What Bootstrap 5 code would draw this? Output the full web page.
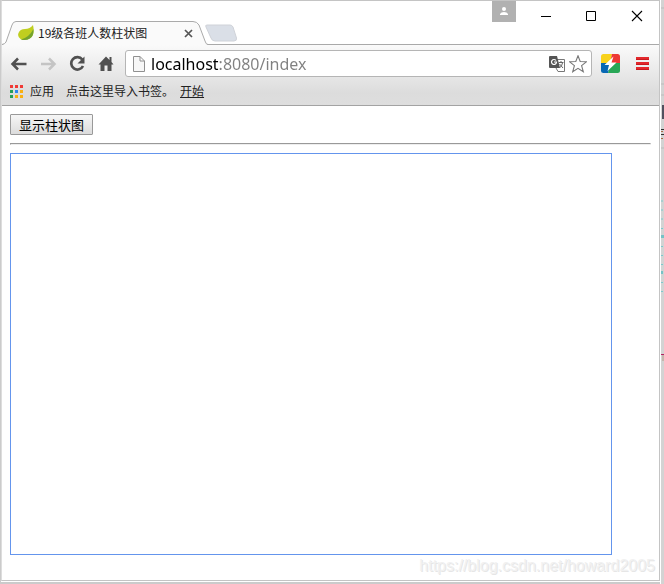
<!DOCTYPE html>
<html lang="zh-CN">
<head>
<meta charset="utf-8">
<meta name="viewport" content="width=device-width, initial-scale=1">
<title>19级各班人数柱状图</title>
<link href="https://cdn.jsdelivr.net/npm/bootstrap@5.3.0/dist/css/bootstrap.min.css" rel="stylesheet">
<style>
body{background:#cbcbcb;font-family:"Noto Sans","Noto Sans CJK SC",sans-serif;font-size:12px;line-height:16px;color:#222;overflow:hidden}
svg{display:block;flex:none}
button.plain{border:0;background:none;padding:0;color:inherit}
.browser{background:#fff;border:1px solid #c4c4c4;border-left-color:#ddd;margin:0 0 3px 1px;min-width:0;box-shadow:0 1px 0 #fff}
.strip{height:44px;border-bottom:1px solid #a9a9a9}
.tabshape{width:206px;height:24px;margin-bottom:-1px}
.tabshape>svg{position:absolute;left:0;top:0}
.tabbody{position:relative;padding:0 11px 0 16px;height:24px;gap:4px;font-family:"Noto Sans CJK SC",sans-serif}
.newtab{margin:0 0 2px -3px}
.winctl{gap:20px;padding-right:16px;height:30px}
.profile{width:24px;height:21px;background:#b1b1b1!important}
.chrome-bar{background:linear-gradient(#fafafa,#dcdcdc 80%,#dedede);border-bottom:1px solid #a3a3a3;height:61px}
.tools{padding:5px 8px 0 7px}
.navicons{gap:9px;margin-right:9px}
.address{height:27px;border:1px solid #b5b5b5;border-radius:3px;background:#fff;padding:0 4px 0 6px}
.address input{border:0;outline:0;padding:0 0 0 5px;min-width:0;font-size:16px;line-height:24px;height:24px;background:linear-gradient(90deg,#000 72px,#808080 72px);-webkit-background-clip:text;background-clip:text;-webkit-text-fill-color:transparent}
.right-tools{gap:15px;margin-left:9px;padding-right:1px}
.bookmarks{padding:6px 8px 0;gap:12px;font-family:"Noto Sans CJK SC",sans-serif}
.bookmarks a{color:#222}
.appicon{margin-right:7px}
.hint{gap:6px}
.page{padding:8px}
.showbtn{height:21px;width:83px;border:1px solid #999;border-radius:1px;background:linear-gradient(#f6f6f6,#dcdcdc);font:13px/17px "Noto Sans CJK SC",sans-serif;color:#000;padding:0}
.page hr{margin:8px 0;border:1px solid #999;border-bottom-color:#eee;border-right-color:#eee;opacity:1;height:2px}
.chart{border:1px solid #6495ed;display:block}
.watermark{right:4px;bottom:4px;font:16px/20px "Liberation Sans",sans-serif;color:#f1f1f1;text-shadow:1px 1px 0 #e6e6e6}
</style>
<script src="https://cdn.jsdelivr.net/npm/bootstrap@5.3.0/dist/js/bootstrap.bundle.min.js"></script>
</head>
<body class="d-flex vh-100">
<main class="browser flex-fill d-flex flex-column position-relative">
  <header class="strip d-flex align-items-end flex-shrink-0">
    <div class="tabshape position-relative flex-shrink-0">
      <svg width="206" height="24" viewBox="0 0 206 24"><path d="M0 24 Q3 23 4 21L10 4Q11 .5 14 .5H191Q195 .5 197 4L203 20Q204 23 206 24Z" fill="#fafafa"/><path d="M0 23.5Q3 23 4 21L10 4Q11 .5 14 .5H191Q195 .5 197 4L203 20Q204 23.5 206 23.5" fill="none" stroke="#aaa"/></svg>
      <div class="tabbody d-flex align-items-center">
        <svg width="16" height="16" viewBox="0 0 16 16"><path d="M15 0Q17 9 13 12.500Q9 15.500 3 14.500Q-1 12 .5 8Q2 4 7 4Q12 4 15 0Z" fill="#bfce20"/><path d="M15.500 4Q16 11 12 13.500Q8 16 3 14.500Q11 12.500 15.500 4Z" fill="#74a32d"/></svg>
        <span class="flex-fill text-nowrap">19级各班人数柱状图</span>
        <button class="plain me-1" type="button" aria-label="关闭标签页"><svg width="9" height="9" viewBox="0 0 9 9"><path d="M1 1L8 8M8 1L1 8" stroke="#555" stroke-width="1.700"/></svg></button>
      </div>
    </div>
    <button class="plain newtab" type="button" aria-label="新标签页"><svg width="32" height="18" viewBox="-3 0 32 18"><path d="M-1 1H22Q24 1 25 3L28.500 14Q29 17 26 17H7Q4 17 3 14L-2 3Q-3 1 -1 1Z" fill="#dadfe7" stroke="#cfd2d8"/></svg></button>
    <div class="winctl d-flex align-items-center ms-auto align-self-start">
      <button class="plain profile align-self-start d-flex justify-content-center align-items-center me-1" type="button" aria-label="用户"><svg width="8" height="10" viewBox="0 0 8 10"><circle cx="4" cy="2" r="2" fill="#fff"/><path d="M0 8V7Q1 5 4 5Q7 5 8 7V8Z" fill="#fff"/></svg></button>
      <button class="plain" type="button" aria-label="最小化"><svg width="12" height="12" viewBox="0 0 12 12"><path d="M1 6.500H11" stroke="#000"/></svg></button>
      <button class="plain ms-2 ps-1" type="button" aria-label="最大化"><svg width="15" height="12" viewBox="0 0 15 12"><path d="M2.500 1.500H11.500V10.500H2.500Z" fill="none" stroke="#000"/></svg></button>
      <button class="plain ms-2 ps-1" type="button" aria-label="关闭"><svg width="12" height="12" viewBox="0 0 12 12"><path d="M1 1L11 11M11 1L1 11" stroke="#000" stroke-width="1.100"/></svg></button>
    </div>
  </header>
  <div class="chrome-bar flex-shrink-0">
    <div class="tools d-flex align-items-center">
      <div class="navicons d-flex align-items-center">
        <button class="plain" type="button" aria-label="后退"><svg width="20" height="20" viewBox="0 0 20 20"><path d="M9 4.500L3.500 10L9 15.500M4 10H17.500" fill="none" stroke="#505050" stroke-width="2.500"/></svg></button>
        <button class="plain" type="button" aria-label="前进"><svg width="20" height="20" viewBox="0 0 20 20"><path d="M11 4.500L16.500 10L11 15.500M16 10H3" fill="none" stroke="#c4c4c4" stroke-width="2.500"/></svg></button>
        <button class="plain" type="button" aria-label="刷新"><svg width="20" height="20" viewBox="0 0 20 20"><path d="M15.300 5.500A6.200 6.200 0 1 0 16 12" fill="none" stroke="#505050" stroke-width="2.700"/><path d="M17.500 2.500V9.500H10.500Z" fill="#505050"/></svg></button>
        <button class="plain" type="button" aria-label="主页"><svg width="20" height="20" viewBox="0 0 20 20"><path d="M10 2.500L2.500 10.500H4.500V17H8.500V11.500H11.500V17H15.500V10.500H17.500L15.500 8V3H13.500V6Z" fill="#505050"/></svg></button>
      </div>
      <div class="address flex-fill d-flex align-items-center">
        <svg width="14" height="16" viewBox="0 0 14 16"><path d="M1.500 .5H8L12.500 5V15.500H1.500ZM8 .5V5H12.500" fill="#f7f7f7" stroke="#909090"/></svg>
        <input class="flex-fill" type="text" value="localhost:8080/index" aria-label="地址">
        <button class="plain me-1" type="button" aria-label="翻译"><svg width="16" height="16" viewBox="0 0 16 16"><path d="M6 3.500H15.500V15.500H9L7 12" fill="#fff" stroke="#777"/><path d="M1 0H8L11 12H1Q0 12 0 11V1Q0 0 1 0Z" fill="#555"/><path d="M7 4.500A2.500 2.500 0 1 0 7.500 6H5" fill="none" stroke="#fff" stroke-width="1.200"/><path d="M9.500 6.500H14.500M12 5V6.500M13.500 7Q13 10 10.500 12M10.500 8L14 12" fill="none" stroke="#666"/></svg></button>
        <button class="plain" type="button" aria-label="收藏"><svg width="18" height="18" viewBox="0 0 18 18"><path d="M9 .8L11.200 6.500L17.300 6.800L12.600 10.700L14.300 16.700L9 13.300L3.700 16.700L5.400 10.700L.7 6.800L6.800 6.500Z" fill="#fff" stroke="#777" stroke-width="1.100"/></svg></button>
      </div>
      <div class="right-tools d-flex align-items-center">
        <button class="plain" type="button" aria-label="扩展程序"><svg width="19" height="19" viewBox="0 0 19 19"><defs><clipPath id="round"><rect width="19" height="19" rx="2.500"/></clipPath></defs><g clip-path="url(#round)"><path d="M0 0H11L9 10H0Z" fill="#f8d21c"/><path d="M11 0H19V9H9Z" fill="#ed3834"/><path d="M0 9H10L7 19H0Z" fill="#0868b4"/><path d="M10 9H19V19H7Z" fill="#28a756"/><path d="M12.500 2.500L3.500 11H8L6.500 17L15.500 8.500H10.500Z" fill="#fff"/></g></svg></button>
        <button class="plain" type="button" aria-label="菜单"><svg width="15" height="15" viewBox="0 0 15 15"><path d="M1 2.500H14M1 7.500H14M1 12.500H14" stroke="#e3282c" stroke-width="3"/><path d="M1 3.500H14M1 8.500H14M1 13.500H14" stroke="#c8191e"/></svg></button>
      </div>
    </div>
    <nav class="bookmarks d-flex align-items-center" aria-label="书签栏">
      <a href="#" class="d-flex align-items-center text-decoration-none"><svg class="appicon" width="13" height="13" viewBox="0 0 13 13"><path d="M0 0H3V3H0ZM5 0H8V3H5ZM10 0H13V3H10Z" fill="#f03a35"/><path d="M0 5H3V8H0ZM0 10H3V13H0Z" fill="#269e59"/><path d="M5 5H8V8H5Z" fill="#2d87ee"/><path d="M10 5H13V8H10ZM10 10H13V13H10ZM5 10H8V13H5Z" fill="#f9b010"/></svg>应用</a>
      <div class="hint d-flex"><span>点击这里导入书签。</span><a href="#">开始</a></div>
    </nav>
  </div>
  <section class="page">
    <button class="showbtn d-block" type="button">显示柱状图</button>
    <hr>
    <canvas class="chart" width="600" height="400"></canvas>
  </section>
  <div class="watermark position-absolute">https://blog.csdn.net/howard2005</div>
</main>
<svg width="4" height="584" viewBox="0 0 4 584" aria-hidden="true"><path d="M0 0H1V584H0Z" fill="#fff"/><path d="M1 0H4V584H1Z" fill="#d3d3d3"/><path d="M1 8H4M1 84H4M1 95H4M1 148H4" stroke="#bbb"/><path d="M2 105H4V119H2Z" fill="#51515f"/><path d="M1 129.500H4M1 134.500H4" stroke="#333"/><path d="M1 131.500H3M1 138.500H3" stroke="#a76a48"/><path d="M1 201H3M1 210H3M1 219H3M1 228.500H3M1 246.500H3M1 255.500H3M1 264.500H3M1 273.500H3M1 282.500H3M1 291.500H3" stroke="#7cc9cc"/><path d="M1 235H4V238H1ZM1 271H3V274H1Z" fill="#75c2c6"/><path d="M1 354.500H4" stroke="#b32363"/><path d="M3 355V361" stroke="#b69a86"/></svg>
</body>
</html>
